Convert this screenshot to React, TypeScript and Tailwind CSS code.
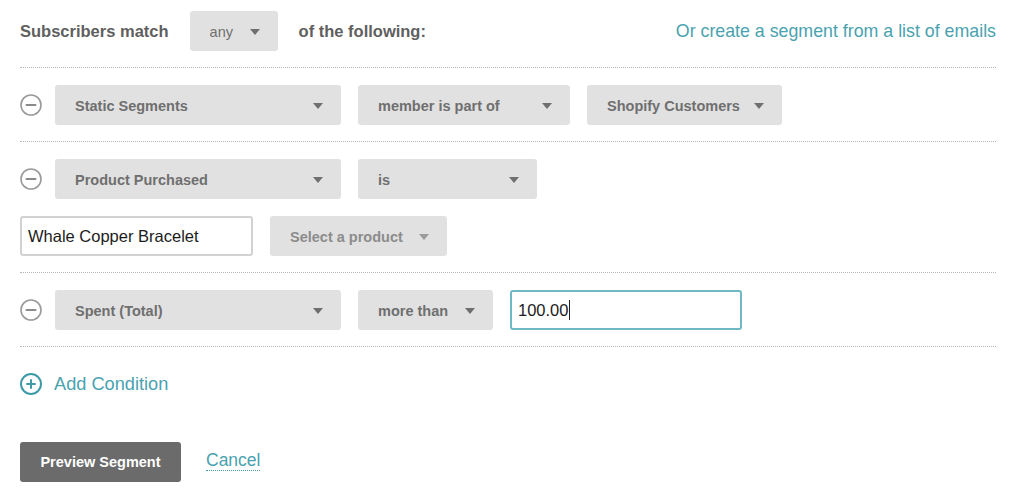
import type { ReactNode } from 'react';

const font = { fontFamily: '"Liberation Sans", Arial, Helvetica, sans-serif' };

function Caret({ light = false }: { light?: boolean }) {
  return (
    <svg width="10" height="6" viewBox="0 0 10 6" className="shrink-0">
      <path d="M0 0 L10 0 L5 6 Z" fill={light ? '#9b9b9b' : '#6f6f6f'} />
    </svg>
  );
}

function Select({
  label,
  width,
  light = false,
  bold = true,
}: {
  label: string;
  width: string;
  light?: boolean;
  bold?: boolean;
}) {
  return (
    <div
      className={`${width} h-[40px] shrink-0 rounded-[3px] bg-[#e1e1e1] flex items-center justify-between pl-[20px] pr-[18px] text-[14.5px] leading-none pt-[2px] ${
        bold ? 'font-bold' : 'font-normal'
      } ${light ? 'text-[#8c8c8c]' : 'text-[#6f6f6f]'}`}
    >
      <span>{label}</span>
      <Caret light={light} />
    </div>
  );
}

function MinusIcon() {
  return (
    <svg width="22" height="22" viewBox="0 0 22 22" className="shrink-0">
      <circle cx="11" cy="11" r="10" fill="none" stroke="#9a9a9a" strokeWidth="1.6" />
      <line x1="6.5" y1="11" x2="15.5" y2="11" stroke="#8a8a8a" strokeWidth="2" strokeLinecap="round" />
    </svg>
  );
}

function PlusIcon() {
  return (
    <svg width="22" height="22" viewBox="0 0 22 22" className="shrink-0">
      <circle cx="11" cy="11" r="10" fill="none" stroke="#3f9aa8" strokeWidth="2" />
      <line x1="7" y1="11" x2="15" y2="11" stroke="#3f9aa8" strokeWidth="2" strokeLinecap="round" />
      <line x1="11" y1="7" x2="11" y2="15" stroke="#3f9aa8" strokeWidth="2" strokeLinecap="round" />
    </svg>
  );
}

function Condition({ children }: { children: ReactNode }) {
  return (
    <div className="border-t border-dotted border-[#b5b5b5] pt-[17px] pb-[16px] flex flex-col gap-[17px]">
      {children}
    </div>
  );
}

export default function App() {
  return (
    <div className="w-[1024px] h-[497px] bg-white px-[20px] pr-[28px] overflow-hidden" style={font}>
      {/* header */}
      <div className="pt-[11px] pb-[16px] flex items-center">
        <span className="text-[16.5px] font-bold text-[#5f5f5f] mr-[21px]">Subscribers match</span>
        <Select label="any" width="w-[88px]" bold={false} />
        <span className="text-[16.5px] font-bold text-[#5f5f5f] ml-[21px]">of the following:</span>
        <a className="ml-auto text-[17.8px] text-[#4aa2af]">Or create a segment from a list of emails</a>
      </div>

      <Condition>
        <div className="flex items-center gap-[17px]">
          <div className="flex items-center gap-[13px]">
            <MinusIcon />
            <Select label="Static Segments" width="w-[286px]" />
          </div>
          <Select label="member is part of" width="w-[212px]" />
          <Select label="Shopify Customers" width="w-[195px]" />
        </div>
      </Condition>

      <Condition>
        <div className="flex items-center gap-[17px]">
          <div className="flex items-center gap-[13px]">
            <MinusIcon />
            <Select label="Product Purchased" width="w-[286px]" />
          </div>
          <Select label="is" width="w-[179px]" />
        </div>
        <div className="flex items-center gap-[17px]">
          <div className="w-[233px] h-[40px] rounded-[3px] border-2 border-[#d2d2d2] flex items-center px-[6px] text-[16.5px] text-[#1c1c1c]">
            Whale Copper Bracelet
          </div>
          <Select label="Select a product" width="w-[177px]" light />
        </div>
      </Condition>

      <Condition>
        <div className="flex items-center gap-[17px]">
          <div className="flex items-center gap-[13px]">
            <MinusIcon />
            <Select label="Spent (Total)" width="w-[286px]" />
          </div>
          <Select label="more than" width="w-[135px]" />
          <div className="w-[232px] h-[40px] rounded-[3px] border-2 border-[#6fb8c4] flex items-center px-[6px] text-[16.5px] text-[#1c1c1c]">
            100.00
            <span className="inline-block w-px h-[20px] bg-[#222] ml-px" />
          </div>
        </div>
      </Condition>

      {/* add condition */}
      <div className="border-t border-dotted border-[#b5b5b5] pt-[26px] flex items-center gap-[12px]">
        <PlusIcon />
        <span className="text-[18.2px] text-[#4aa2af] leading-[22px]">Add Condition</span>
      </div>

      {/* actions */}
      <div className="mt-[47px] flex items-center gap-[25px]">
        <button className="w-[161px] h-[40px] rounded-[3px] bg-[#6b6b6b] text-white text-[14.5px] font-bold pt-[2px]">
          Preview Segment
        </button>
        <a className="text-[17.5px] text-[#4aa2af] border-b border-dotted border-[#4aa2af] leading-[20px] mb-[3px]">Cancel</a>
      </div>
    </div>
  );
}
